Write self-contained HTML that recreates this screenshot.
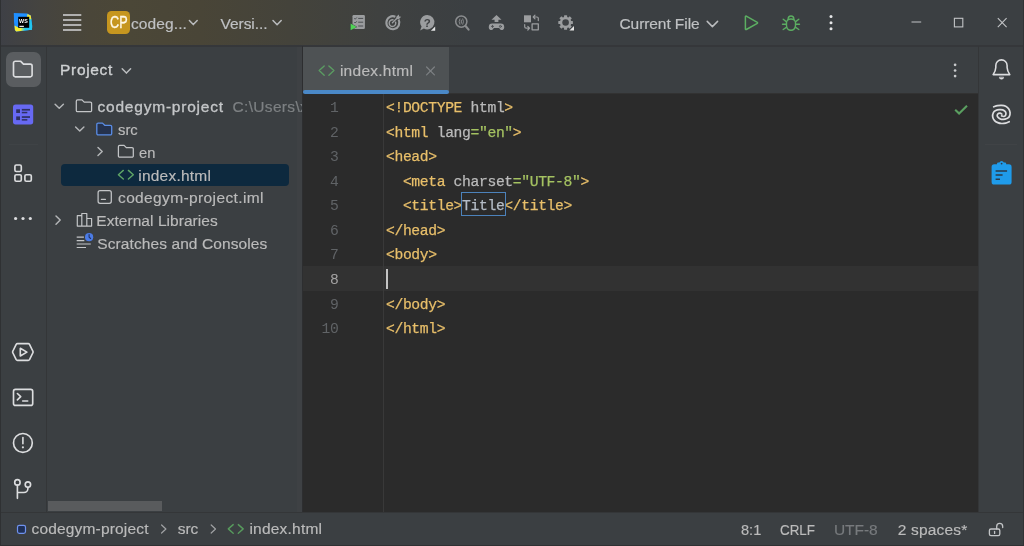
<!DOCTYPE html>
<html lang="en">
<head>
<meta charset="UTF-8">
<title>codegym-project – index.html</title>
<style>
*{box-sizing:border-box;margin:0;padding:0}
html,body{width:1024px;height:546px;overflow:hidden;background:#3b3f42}
body{position:relative;font-family:"Liberation Sans",sans-serif;color:#bbbbbb;font-size:15px}
.abs{position:absolute}
.t{position:absolute;white-space:pre;line-height:20px;height:20px;-webkit-text-stroke-width:0.18px}
#titlebar{left:0;top:0;width:1024px;height:45.5px;background:linear-gradient(90deg,#3e4046 0px,#454440 40px,#4a4639 90px,#4b4737 130px,#494537 200px,#44433b 290px,#3f4140 380px,#3b3f42 470px)}
#tbline{left:0;top:45.3px;width:1024px;height:1.5px;background:#35373a}
#leftedge{left:0;top:0;width:1px;height:546px;background:#2f3133}
#botedge{left:0;top:544.5px;width:1024px;height:1.5px;background:#2f3133}
#rightedge{left:1023px;top:0;width:1px;height:546px;background:#303234}
#lstripeline{left:46px;top:46px;width:1px;height:466px;background:#343638}
#projline{left:302px;top:46px;width:1px;height:466px;background:#2d2e30}
#projband{left:297px;top:47px;width:5px;height:465px;background:#3e4144}
#tab{left:303px;top:47px;width:146px;height:46px;background:#4e5254}
#tabbarline{left:303px;top:93px;width:675px;height:1px;background:#323232}
#tabul{left:303px;top:90px;width:146px;height:4px;background:#4a88c7;border-radius:2px}
#editor{left:303px;top:94px;width:675px;height:418px;background:#2b2b2b}
#curline{left:303px;top:266px;width:675px;height:24.5px;background:#323232}
#gutline{left:383px;top:94px;width:1px;height:418px;background:#393939}
#rstripeline{left:978px;top:46px;width:1px;height:466px;background:#343638}
#statusline{left:0;top:512px;width:1024px;height:1px;background:#343638}
#hscroll{left:48px;top:501px;width:114px;height:10px;background:#595b5d}
#sel{left:61px;top:163.5px;width:228px;height:22.5px;background:#0d293e;border-radius:4px}
#lbtn{left:6px;top:52px;width:35px;height:35px;background:#5a5d60;border-radius:7px}
#lsep{left:9px;top:144px;width:29px;height:1px;background:#3f4346}
#rsep{left:985px;top:144px;width:32px;height:1px;background:#404346}
#cp{left:107px;top:11.1px;width:22.7px;height:22.8px;background:#c6961f;border-radius:4.5px}
.code,.ln{font-family:"Liberation Mono",monospace;font-size:14.7px;letter-spacing:-0.361px;line-height:20px;height:20px;position:absolute;white-space:pre}
.code{left:386px;color:#a9b7c6;-webkit-text-stroke-width:0.25px}
.ln{width:40px;text-align:right;left:298.5px;color:#606366}
.y{color:#e8bf6a}.g{color:#a5c261}.a{color:#bababa}
svg{position:absolute;overflow:visible}
</style>
</head>
<body>
<div id="all" style="position:absolute;left:0;top:0;width:1024px;height:546px;will-change:transform">
<div class="abs" id="titlebar"></div>
<div class="abs" id="tbline"></div>
<div class="abs" id="lstripeline"></div>
<div class="abs" id="projband"></div>
<div class="abs" id="projline"></div>
<div class="abs" id="tab"></div>
<div class="abs" id="tabbarline"></div>
<div class="abs" id="editor"></div>
<div class="abs" id="tabul"></div>
<div class="abs" id="curline"></div>
<div class="abs" id="gutline"></div>
<div class="abs" id="rstripeline"></div>
<div class="abs" id="statusline"></div>
<div class="abs" id="hscroll"></div>
<div class="abs" id="sel"></div>
<div class="abs" id="lbtn"></div>
<div class="abs" id="lsep"></div>
<div class="abs" id="rsep"></div>
<div class="abs" id="cp"></div>
<div class="abs" id="botedge"></div>
<div class="abs" id="leftedge"></div>
<div class="abs" id="rightedge"></div>

<!-- ui text -->
<div class="t" style="left:110.30px;top:12.60px;font-size:16px;color:#fff8e6;letter-spacing:0.000px;transform:scaleX(0.79);transform-origin:0 0;-webkit-text-stroke:0.35px #fff8e6;">CP</div>
<div class="t" style="left:130.90px;top:13.80px;font-size:15.5px;color:#bfc1c3;letter-spacing:0.122px;">codeg...</div>
<div class="t" style="left:220.50px;top:13.80px;font-size:15.5px;color:#bfc1c3;letter-spacing:-0.039px;">Versi...</div>
<div class="t" style="left:619.50px;top:14.20px;font-size:15.5px;color:#bfc1c3;letter-spacing:-0.077px;">Current File</div>
<div class="t" style="left:60.10px;top:60.40px;font-size:15.5px;color:#cfd1d3;letter-spacing:0.661px;-webkit-text-stroke:0.35px #cfd1d3;">Project</div>
<div class="t" style="left:97.50px;top:97.20px;font-size:15.5px;color:#c4c6c8;letter-spacing:0.784px;-webkit-text-stroke:0.32px #c4c6c8;">codegym-project</div>
<div class="t" style="left:232.50px;top:97.20px;font-size:15.5px;color:#7d8083;letter-spacing:0.330px;width:69.5px;overflow:hidden;">C:\Users\xyz\IdeaProjects</div>
<div class="t" style="left:118.00px;top:120.10px;font-size:15.5px;color:#bbbbbb;letter-spacing:0.000px;transform:scaleX(0.956);transform-origin:0 0;">src</div>
<div class="t" style="left:139.25px;top:142.80px;font-size:15.5px;color:#bbbbbb;letter-spacing:0.000px;transform:scaleX(0.948);transform-origin:0 0;">en</div>
<div class="t" style="left:138.25px;top:165.70px;font-size:15.5px;color:#bbbbbb;letter-spacing:0.228px;">index.html</div>
<div class="t" style="left:118.00px;top:188.20px;font-size:15.5px;color:#bbbbbb;letter-spacing:0.376px;">codegym-project.iml</div>
<div class="t" style="left:96.25px;top:210.80px;font-size:15.5px;color:#bbbbbb;letter-spacing:0.052px;">External Libraries</div>
<div class="t" style="left:97.25px;top:233.60px;font-size:15.5px;color:#bbbbbb;letter-spacing:0.095px;">Scratches and Consoles</div>
<div class="t" style="left:339.90px;top:61.00px;font-size:15.5px;color:#bbbbbb;letter-spacing:0.267px;">index.html</div>
<div class="t" style="left:31.50px;top:519.10px;font-size:15.5px;color:#bbbbbb;letter-spacing:0.174px;">codegym-project</div>
<div class="t" style="left:177.70px;top:519.10px;font-size:15.5px;color:#bbbbbb;letter-spacing:-0.006px;">src</div>
<div class="t" style="left:249.40px;top:519.10px;font-size:15.5px;color:#bbbbbb;letter-spacing:0.222px;">index.html</div>
<div class="t" style="left:741.00px;top:520.10px;font-size:15.5px;color:#bbbbbb;letter-spacing:0.000px;transform:scaleX(0.941);transform-origin:0 0;">8:1</div>
<div class="t" style="left:779.70px;top:520.10px;font-size:15.5px;color:#bbbbbb;letter-spacing:0.000px;transform:scaleX(0.865);transform-origin:0 0;">CRLF</div>
<div class="t" style="left:833.90px;top:520.10px;font-size:15.5px;color:#777a7d;letter-spacing:-0.023px;">UTF-8</div>
<div class="t" style="left:897.70px;top:520.10px;font-size:15.5px;color:#bbbbbb;letter-spacing:0.183px;">2 spaces*</div>
<!-- code -->
<div class="ln" style="top:98px">1</div>
<div class="code" style="top:98px"><span class="y">&lt;!DOCTYPE</span><span class="a"> html</span><span class="y">&gt;</span></div>
<div class="ln" style="top:123px">2</div>
<div class="code" style="top:123px"><span class="y">&lt;html</span><span class="a"> lang</span><span class="g">="en"</span><span class="y">&gt;</span></div>
<div class="ln" style="top:147px">3</div>
<div class="code" style="top:147px"><span class="y">&lt;head&gt;</span></div>
<div class="ln" style="top:172px">4</div>
<div class="code" style="top:172px">  <span class="y">&lt;meta</span><span class="a"> charset</span><span class="g">="UTF-8"</span><span class="y">&gt;</span></div>
<div class="ln" style="top:196px">5</div>
<div class="code" style="top:196px">  <span class="y">&lt;title&gt;</span><span style="color:#b4bcc6">Title</span><span class="y">&lt;/title&gt;</span></div>
<div class="ln" style="top:221px">6</div>
<div class="code" style="top:221px"><span class="y">&lt;/head&gt;</span></div>
<div class="ln" style="top:245px">7</div>
<div class="code" style="top:245px"><span class="y">&lt;body&gt;</span></div>
<div class="ln" style="top:270px;color:#a4a3a3">8</div>
<div class="ln" style="top:295px">9</div>
<div class="code" style="top:295px"><span class="y">&lt;/body&gt;</span></div>
<div class="ln" style="top:319px">10</div>
<div class="code" style="top:319px"><span class="y">&lt;/html&gt;</span></div>
<div class="abs" style="left:385.5px;top:268.5px;width:2.5px;height:20px;background:#c4c4c4"></div>
<div class="abs" style="left:461px;top:192.4px;width:44.5px;height:24px;border:1px solid #4c82bb"></div>
<!-- icons -->
<svg width="1024" height="546" viewBox="0 0 1024 546" style="left:0;top:0" fill="none" stroke-linecap="round" stroke-linejoin="round">
<!-- WS logo -->
<defs><linearGradient id="wsg" x1="14" y1="0" x2="32" y2="0" gradientUnits="userSpaceOnUse"><stop offset="0" stop-color="#f6ec2c"/><stop offset="0.36" stop-color="#f6ec2c"/><stop offset="0.62" stop-color="#22c6f0"/><stop offset="1" stop-color="#22c6f0"/></linearGradient></defs>
<g stroke="none">
<path d="M13.8 12.9L27.2 13.5L30.8 15.4L32.2 26.1L31.9 29.7L16.2 31.6L14.9 30L14 21.7Z" fill="#1f8fff"/>
<path d="M29 18.5L31.2 18.8L32.2 26.1L31.9 29.7L29 29.7Z" fill="#22c6f0"/>
<path d="M27.4 13.9L30.8 15.4L31.3 19.4L29 18.8L29 16.9L27 16.9Z" fill="#f2e63a"/>
<path d="M14.5 25.6L18.4 27.6L29.2 27.6L32.1 27.5L31.9 29.7L16.2 31.6L14.9 30Z" fill="url(#wsg)"/>
<rect x="18.2" y="16.8" width="11" height="11" fill="#000000"/>
<rect x="19.3" y="25.8" width="4.6" height="1.1" fill="#ffffff"/>
</g>
<text x="19.1" y="23" font-family="Liberation Sans, sans-serif" font-weight="700" font-size="5.2" fill="#ffffff" stroke="none" textLength="8.6" lengthAdjust="spacingAndGlyphs">WS</text>
<!-- hamburger -->
<g stroke="#d3d4d6" stroke-width="1.7" stroke-linecap="butt">
<path d="M63 15h18.3M63 20h18.3M63 25h18.3M63 30h18.3"/>
</g>
<!-- title chevrons -->
<g stroke="#babcbe" stroke-width="1.5">
<path d="M189.4 20.6l3.9 4 3.9-4"/>
<path d="M273 20.6l4.1 4.2 4.1-4.2"/>
<path d="M707.2 21.4l5.2 5.2 5.2-5.2"/>
<path d="M122.2 68.8l4.2 4.3 4.2-4.3"/>
</g>
<!-- tree chevrons -->
<g stroke="#b4b6b8" stroke-width="1.45">
<path d="M55.1 104.2l4.15 4.15 4.15-4.15"/>
<path d="M75.6 126.9l4.15 4.15 4.15-4.15"/>
<path d="M98 147.4l4.2 4.1-4.2 4.1"/>
<path d="M56 216l4.2 4.1-4.2 4.1"/>
</g>
<!-- folders -->
<g stroke="#c3c5c7" stroke-width="1.25">
<path id="fold" d="M76.3 101.2a1.3 1.3 0 0 1 1.3-1.3h4.4l2.2 2.2h6.1a1.3 1.3 0 0 1 1.3 1.3v7a1.3 1.3 0 0 1-1.3 1.3h-12.700000000000001a1.3 1.3 0 0 1-1.3-1.3z"/>
<path d="M118.4 146.7a1.3 1.3 0 0 1 1.3-1.3h4.4l2.2 2.2h5.7a1.3 1.3 0 0 1 1.3 1.3v7a1.3 1.3 0 0 1-1.3 1.3h-12.3a1.3 1.3 0 0 1-1.3-1.3z"/>
</g>
<path d="M96.8 124.4a1.3 1.3 0 0 1 1.3-1.3h4.4l2.2 2.2h5.7a1.3 1.3 0 0 1 1.3 1.3v7a1.3 1.3 0 0 1-1.3 1.3h-12.3a1.3 1.3 0 0 1-1.3-1.3z" stroke="#5a8de6" stroke-width="1.3" fill="#25324d"/>
<!-- html icons -->
<g stroke="#5fa566" stroke-width="1.4">
<path d="M123.3 170.4l-4.9 4.3 4.9 4.3M128.4 170.4l4.9 4.3-4.9 4.3"/>
<path d="M324.2 66l-5 4.6 5 4.6M328.9 66l5 4.6-5 4.6" stroke="#5b9c62"/>
<path d="M233.2 524.6l-4.9 4.3 4.9 4.3M238.3 524.6l4.9 4.3-4.9 4.3" stroke="#579a5d"/>
</g>
<!-- iml -->
<g stroke="#c3c5c7" stroke-width="1.25">
<rect x="98.1" y="190.7" width="13.2" height="12.6" rx="2"/>
<path d="M101.4 199.4h4"/>
</g>
<!-- ext libs -->
<g stroke="#c3c5c7" stroke-width="1.2">
<path d="M77.3 226.1v-10.4h4.5v10.4zM81.8 226.1v-12.6h5v12.6zM86.8 226.1v-7.6h4.8v7.6z"/>
</g>
<!-- scratches -->
<g stroke="#c3c5c7" stroke-width="1.2" stroke-linecap="butt">
<path d="M76.7 237.2h7.2M76.7 240.6h7.6M76.7 244h14.1M76.7 247.5h9.3"/>
</g>
<circle cx="89.1" cy="237.2" r="4.1" fill="#4b7be5" stroke="none"/>
<path d="M89.1 234.6v2.6l1.5 1.3" stroke="#1f3163" stroke-width="1.1"/>
<!-- tab close -->
<path d="M426.6 67l7.8 7.8M434.4 67l-7.8 7.8" stroke="#7d8083" stroke-width="1.2"/>
<!-- tab bar kebab -->
<g fill="#c8cacc" stroke="none"><circle cx="955.1" cy="64.8" r="1.35"/><circle cx="955.1" cy="70.5" r="1.35"/><circle cx="955.1" cy="76.1" r="1.35"/></g>
<!-- status chevrons -->
<g stroke="#a0a2a4" stroke-width="1.2">
<path d="M161.6 525l4.3 4-4.3 4"/>
<path d="M211.2 525l4.3 4-4.3 4"/>
</g>
<!-- module icon -->
<rect x="17.5" y="525.3" width="8" height="8" rx="1.8" fill="#1f3058" stroke="#6f92ee" stroke-width="1.2"/>
<!-- lock -->
<g stroke="#c3c5c7" stroke-width="1.3">
<rect x="989.4" y="529" width="10.4" height="6.6" rx="1.6"/>
<path d="M996.7 529v-2.6a3 3 0 0 1 6 0v1.2"/>
<path d="M994.6 531.4v2"/>
</g>
<!-- check -->
<path d="M955.2 109.7l3.9 3.8 7.9-7.7" stroke="#5a9f60" stroke-width="2.1" stroke-linecap="butt" stroke-linejoin="miter"/>

<!-- tb1 -->
<rect x="352.5" y="15" width="12.4" height="14" rx="1.2" fill="#9b9d9f"/>
<g stroke="#4a4d50" stroke-width="1" stroke-linecap="butt"><path d="M354.3 18.3l.9.9 1.6-1.7M358.2 18.4h5M354.3 22.1l.9.9 1.6-1.7M358.2 22.2h5M358.2 26h5"/></g>
<path d="M350.6 23.6l6 3.3-6 3.3z" fill="#4fd355" stroke="#3b3f42" stroke-width="0.8" paint-order="stroke"/>
<!-- tb2 -->
<g stroke="#9b9d9f"><path d="M398.6 19.6a6.5 6.5 0 1 1-3.2-2.9" stroke-width="2.1" stroke-linecap="butt"/>
<path d="M395.4 21.6a3.3 3.3 0 1 1-1.9-1.6" stroke-width="1.4" stroke-linecap="butt"/>
<path d="M392.4 22.8l5-5" stroke-width="1.3"/></g>
<path d="M396.2 19.2l.3-2.6 2.3-2.2.4 2 2 .4-2.2 2.3z" fill="#9b9d9f"/>
<!-- tb3 -->
<path d="M427.3 15a7.2 7.2 0 1 1-3.4 13.6l-3.8 1.8 1.5-3.9a7.2 7.2 0 0 1 5.700000000000001-11.5z" fill="#9b9d9f"/>
<path d="M435.2 26.4v4.300000000000001h-4.300000000000001z" fill="#e4e4e4" stroke="#3b3f42" stroke-width="1" paint-order="stroke" stroke-linejoin="miter"/>
<text x="427.3" y="26.6" text-anchor="middle" font-family="Liberation Sans, sans-serif" font-weight="700" font-size="11.5" fill="#3f4244">?</text>
<!-- tb4 -->
<g stroke="#8b8d8f"><circle cx="461.3" cy="21.6" r="5.6" stroke-width="1.5"/><path d="M465.6 26l3 3.700000000000001" stroke-width="2.1"/>
<path d="M459.8 18.9q-1.5 2.7 0 5.4M462.8 18.9q1.5 2.7 0 5.4" stroke-width="0.9"/><path d="M461.3 20.2v3" stroke-width="1"/></g>
<!-- tb5 -->
<path d="M496.5 14.9l5 4.9h-3.1v2.1h-3.8v-2.1h-3.1z" fill="#9b9d9f"/>
<path d="M492.2 23.4h8.600000000000001a3.4 3.4 0 0 1 3.4 3.4v1a2.300000000000001 2.300000000000001 0 0 1-4.1 1.4l-1-1.300000000000001h-5.2l-1 1.300000000000001a2.300000000000001 2.300000000000001 0 0 1-4.1-1.4v-1a3.4 3.4 0 0 1 3.4-3.4z" fill="#9b9d9f"/>
<g stroke="#4a4d50" stroke-width="0.9"><path d="M491.4 26.4h2.2M492.5 25.3v2.2"/><circle cx="500.4" cy="26.4" r="1" /></g>
<!-- tb6 -->
<rect x="524" y="15.3" width="7" height="7" fill="#9b9d9f"/>
<rect x="532.1" y="23.8" width="6.2" height="6" stroke="#9b9d9f" stroke-width="1.3"/>
<g stroke="#9b9d9f" stroke-width="1.2"><path d="M538.3 20.6v-2.2a1.4 1.4 0 0 0-1.4-1.4h-3.4M535 15.2l-1.8 1.8 1.8 1.8"/>
<path d="M524.7 24.600000000000001v2.2a1.4 1.4 0 0 0 1.4 1.4h3.2M527.8 26.400000000000002l1.8 1.8-1.8 1.8"/></g>
<!-- tb7 -->
<g fill="#9b9d9f"><circle cx="565.6" cy="22.5" r="5.7"/><rect x="564.05" y="15.20" width="3.1" height="3.2" rx="0.5" transform="rotate(0 565.6 22.5)"/><rect x="564.05" y="15.20" width="3.1" height="3.2" rx="0.5" transform="rotate(45 565.6 22.5)"/><rect x="564.05" y="15.20" width="3.1" height="3.2" rx="0.5" transform="rotate(90 565.6 22.5)"/><rect x="564.05" y="15.20" width="3.1" height="3.2" rx="0.5" transform="rotate(135 565.6 22.5)"/><rect x="564.05" y="15.20" width="3.1" height="3.2" rx="0.5" transform="rotate(180 565.6 22.5)"/><rect x="564.05" y="15.20" width="3.1" height="3.2" rx="0.5" transform="rotate(225 565.6 22.5)"/><rect x="564.05" y="15.20" width="3.1" height="3.2" rx="0.5" transform="rotate(270 565.6 22.5)"/><rect x="564.05" y="15.20" width="3.1" height="3.2" rx="0.5" transform="rotate(315 565.6 22.5)"/></g>
<circle cx="565.6" cy="22.5" r="3.3" fill="#3f4245"/>
<path d="M574 26v4.6h-4.6z" fill="#e4e4e4" stroke="#3b3f42" stroke-width="1" paint-order="stroke" stroke-linejoin="miter"/>
<!-- run -->
<path d="M745.4 16.6v12.4a.6.6 0 0 0 .9.5l11-6.2a.6.6 0 0 0 0-1l-11-6.2a.6.6 0 0 0-.9.5z" stroke="#5cae62" stroke-width="1.5"/>
<!-- debug -->
<g stroke="#5cae62" stroke-width="1.4">
<path d="M786.5 22.6a4.5 3.6 0 0 1 9 0v3a4.5 4.700000000000001 0 0 1-9 0z"/>
<path d="M788.1 19.4a2.9 3.4 0 0 1 5.8 0"/>
<path d="M786.3 21.6l-3.1-2.4M786.3 24.3h-3.8M786.6 27.2l-3.4 2.3M795.7 21.6l3.1-2.4M795.7 24.3h3.8M795.4 27.2l3.4 2.3"/>
</g>
<g fill="#e6e7e8"><circle cx="831" cy="16.5" r="1.5"/><circle cx="831" cy="22.7" r="1.5"/><circle cx="831" cy="28.8" r="1.5"/></g>
<!-- window controls -->
<g stroke="#c2c4c6" stroke-width="1.1" stroke-linecap="butt" stroke-linejoin="miter">
<path d="M911.5 22h9.7" stroke-width="1"/>
<rect x="954.4" y="18.3" width="8.4" height="8.6"/>
<path d="M997.8 18.1l8.8 9M1006.6 18.1l-8.8 9"/>
</g>
<!-- left stripe -->
<g stroke="#dcdddf" stroke-width="1.65">
<path d="M13.5 63a1.8 1.8 0 0 1 1.8-1.8h5.2l3 3h6.8a1.8 1.8 0 0 1 1.8 1.8v9a1.8 1.8 0 0 1-1.8 1.8h-15a1.8 1.8 0 0 1-1.8-1.8z"/>
</g>
<rect x="13" y="104.4" width="20.2" height="20" rx="2.6" fill="#6769f3"/>
<g fill="#2f3162"><rect x="16.2" y="109.3" width="3.8" height="3.7"/><rect x="16.2" y="116.4" width="3.8" height="3.7"/>
<rect x="21.8" y="108.9" width="8.2" height="1.7"/><rect x="21.8" y="111.8" width="5.5" height="1.5"/><rect x="21.8" y="116.2" width="8.2" height="1.7"/><rect x="21.8" y="119.1" width="5.5" height="1.5"/></g>
<g stroke="#dcdddf" stroke-width="1.65">
<rect x="14.9" y="165" width="6.4" height="6.5" rx="1.4"/><rect x="14.9" y="174.7" width="6.4" height="6.5" rx="1.4"/><rect x="24.9" y="174.7" width="6.4" height="6.5" rx="1.4"/>
</g>
<g fill="#dcdddf"><circle cx="15.6" cy="218.5" r="1.6"/><circle cx="23" cy="218.5" r="1.6"/><circle cx="30.3" cy="218.5" r="1.6"/></g>
<g stroke="#dcdddf" stroke-width="1.65">
<path d="M17.5 343.6h10.7a1.5 1.5 0 0 1 1.3.75l3.4 6.9a1.6 1.6 0 0 1 0 1.5l-3.4 6.9a1.5 1.5 0 0 1-1.3.75h-10.7a1.5 1.5 0 0 1-1.3-.75l-3.4-6.9a1.6 1.6 0 0 1 0-1.5l3.4-6.9a1.5 1.5 0 0 1 1.3-.75z"/>
<path d="M20.3 348.3v7.7l6.6-3.85z"/>
<rect x="13.5" y="389.4" width="19.2" height="16" rx="2"/>
<path d="M17.4 393.5l3.3 3.200000000000003-3.3 3.200000000000003M22.7 401h5"/>
<circle cx="22.9" cy="442.9" r="9.4"/>
<path d="M22.9 437.6v6.2" stroke-width="1.6"/>
<circle cx="17.4" cy="482.4" r="2.7"/><circle cx="27.9" cy="484.6" r="2.7"/>
<path d="M17.4 485.1v13.2M27.9 487.3v1.2a4 4 0 0 1-4 4h-6.5"/>
</g>
<circle cx="22.9" cy="447.3" r="1.1" fill="#dcdddf"/>
<!-- right stripe -->
<g stroke="#dcdddf" stroke-width="1.4">
<path d="M993.1 74.6c1.6-2.4 2.7-4.300000000000001 2.7-7v-2a5.65 5.7 0 0 1 11.3 0v2c0 2.7 1.1 4.6 2.7 7z" stroke-width="1.55"/>
<path d="M999.3 77.5a2.2 1.7 0 0 0 4.4 0z" fill="#dcdddf" stroke-width="0.6"/>
<path stroke-width="1.7" d="M993.67 106.79C994.31 106.60 996.16 105.86 997.48 105.62C998.80 105.38 1000.22 105.23 1001.58 105.33C1002.95 105.42 1004.52 105.62 1005.69 106.21C1006.86 106.79 1007.89 107.77 1008.62 108.84C1009.35 109.92 1009.99 111.34 1010.08 112.65C1010.18 113.97 1009.74 115.78 1009.21 116.76C1008.67 117.73 1007.84 118.08 1006.86 118.52C1005.88 118.96 1004.52 119.38 1003.34 119.40C1002.17 119.41 1000.82 119.15 999.83 118.63C998.83 118.12 997.71 117.07 997.36 116.29C997.02 115.51 997.32 114.47 997.77 113.94C998.23 113.42 999.44 113.09 1000.12 113.12C1000.80 113.15 1001.58 113.95 1001.88 114.12"/>
<path stroke-width="1.7" d="M1009.21 121.74C1008.62 121.96 1006.96 122.79 1005.69 123.09C1004.42 123.38 1002.90 123.58 1001.58 123.50C1000.27 123.42 998.95 123.11 997.77 122.62C996.60 122.13 995.40 121.54 994.55 120.57C993.70 119.59 992.87 118.08 992.68 116.76C992.48 115.44 992.87 113.68 993.38 112.65C993.89 111.63 994.75 111.09 995.72 110.60C996.70 110.11 998.07 109.84 999.24 109.72C1000.41 109.61 1001.73 109.56 1002.76 109.90C1003.78 110.24 1004.89 110.97 1005.40 111.77C1005.90 112.58 1006.05 113.92 1005.81 114.71C1005.56 115.49 1004.63 116.27 1003.93 116.46C1003.23 116.66 1001.98 115.98 1001.58 115.88"/>
</g>
<rect x="991.6" y="164.3" width="20" height="20.3" rx="2.6" fill="#1f9bea"/>
<path d="M997 166v-2.2a1.2 1.2 0 0 1 1.2-1.2h1.2a2.300000000000001 2.300000000000001 0 0 1 4.4 0h1.2a1.2 1.2 0 0 1 1.2 1.2v2.2z" fill="#1f9bea"/>
<circle cx="1001.6" cy="163.6" r="0.9" fill="#2b3a4a"/>
<g stroke="#2b3a4a" stroke-width="1.5" stroke-linecap="butt"><path d="M995.6 171h11.5M995.6 175.1h7M995.6 179.3h4.4"/></g>
</svg>

</div>
</body>
</html>
